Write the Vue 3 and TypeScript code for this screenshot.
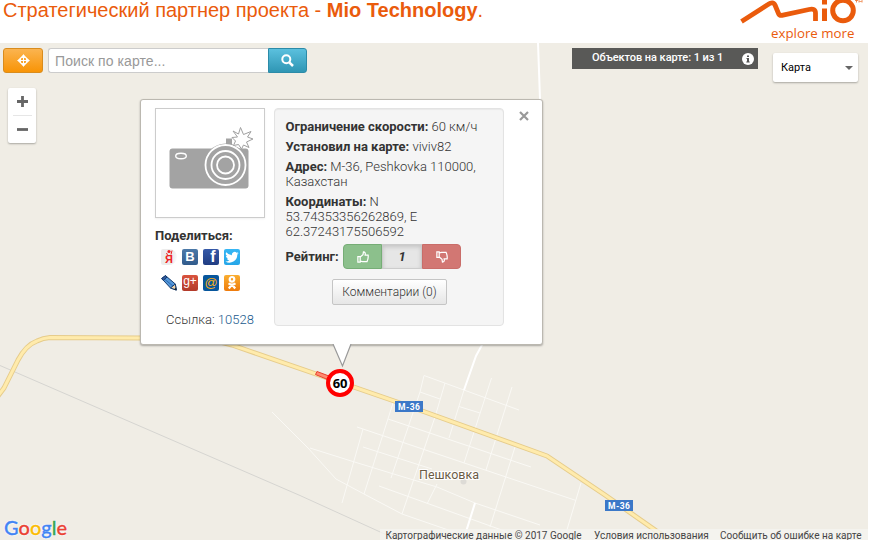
<script setup lang="ts">
import { ref } from 'vue'

interface Street { d: string }
interface ShareLink { id: string; label: string }

const query = ref('')
const rating = ref(1)

const streets: Street[] = [
  { d: 'M424 375.500L519 410' },
  { d: 'M420 392L440 399' },
  { d: 'M459 406.500L480 413' },
  { d: 'M388 419L531 467' },
  { d: 'M357 427L576 500.500' },
  { d: 'M363 447L432 469' },
  { d: 'M310 448L348 460L397 475L437 487L475 503L540 525' },
  { d: 'M379 486L510 533' },
  { d: 'M363 429L342 503' },
  { d: 'M393 403L364 494' },
  { d: 'M424 375.500L420 392L391 478' },
  { d: 'M445 383L435 417L402 514' },
  { d: 'M464 390L449 438' },
  { d: 'M491.500 378L464 463' },
  { d: 'M512 387L486 470' },
  { d: 'M515 447L490 527' },
  { d: 'M581 483L566 533' },
  { d: 'M437 484L427 504' },
  { d: 'M272 412L308 448L336 479L364 494L402 514L457 533' },
]

const shares: ShareLink[] = [
  { id: 'ya', label: 'Я' },
  { id: 'vk', label: 'B' },
  { id: 'fb', label: 'f' },
  { id: 'tw', label: '' },
  { id: 'lj', label: '' },
  { id: 'gp', label: 'g+' },
  { id: 'mail', label: '@' },
  { id: 'ok', label: '' },
]

const google = [
  { c: 'G', color: '#4285f4' },
  { c: 'o', color: '#ea4335' },
  { c: 'o', color: '#fbbc05' },
  { c: 'g', color: '#4285f4' },
  { c: 'l', color: '#34a853' },
  { c: 'e', color: '#ea4335' },
]

const thumb = 'M2 6.500h2.500v6H2zM4.500 7L7.500 4.500L8 1.500Q10.500 1.500 9.800 5H13Q13.500 8.500 11.800 12H7L4.500 11.500'
</script>

<template>
  <div class="page">
    <header class="header">
      <h2 class="title">Стратегический партнер проекта - <b>Mio Technology</b>.</h2>
      <div class="logo">
        <svg class="logo-mark" width="130" height="25" viewBox="738 0 130 25">
          <g fill="none" stroke="#ea5b0c">
            <path d="M741.500 21.500L768 4.500Q773 1 775 5L778.500 13.500Q779.500 16 783 15.200L809 9.500Q815.500 8 815.500 13V21" stroke-width="4.800" stroke-linejoin="round" />
            <path d="M824.500 8.500V21M824.500 0V4.500" stroke-width="5" />
            <circle cx="843" cy="10.500" r="10.300" stroke-width="5" />
            <path d="M855 .5H858M856.500 .5V2.500M859 2.500V.5L860.500 2L862 .5V2.500" stroke-width=".7" />
          </g>
        </svg>
        <span class="slogan">explore more</span>
      </div>
    </header>

    <main class="map">
      <svg class="roads" width="868" height="497" viewBox="0 43 868 497">
        <path d="M0 365.500L300 495.500L400 541" fill="none" stroke="#d6d5d1" stroke-width="1" />
        <g fill="none" stroke="#faf9f5" stroke-width="1">
          <path v-for="s in streets" :key="s.d" :d="s.d" />
        </g>
        <g fill="none" stroke="#fff" stroke-width="2">
          <path d="M538 43L540 99L482 345L476 356L464 390" />
          <path d="M475 503L465 535" />
        </g>
        <circle cx="463.500" cy="481.500" r="3" fill="#dddbd6" />
        <g fill="none" stroke-linejoin="round">
          <path class="road-edge" d="M-2 396L4 388L18 360Q26 345 37 341Q43 338 50 337.500L140 338L205 338L232 345L400 403L547 456L605 495L675 544" />
          <path class="road-fill" d="M-2 396L4 388L18 360Q26 345 37 341Q43 338 50 337.500L140 338L205 338L232 345L400 403L547 456L605 495L675 544" />
        </g>
        <path d="M315.500 374.500L317 371.500L329 376L327.500 379.500Z" fill="#ff8a70" stroke="#e8402f" />
        <rect x="172" y="334" width="28" height="11" fill="#2f66b4" />
        <g class="shield">
          <rect x="395" y="401" width="28" height="11" />
          <text x="409" y="409.500" textLength="22">М-36</text>
          <rect x="605" y="500" width="28" height="11" />
          <text x="619" y="508.500" textLength="22">М-36</text>
        </g>
        <text class="town" x="419" y="479" textLength="60">Пешковка</text>
      </svg>

      <div class="toolbar">
        <button class="locate" aria-label="locate">
          <svg width="13" height="13" viewBox="0 0 13 13" fill="none" stroke="#fff">
            <path d="M6.500 0.500L9 3.500H4ZM6.500 12.500L9 9.500H4ZM0.500 6.500L3.500 4V9ZM12.500 6.500L9.500 4V9Z" fill="#fff" stroke-width=".6" />
            <circle cx="6.500" cy="6.500" r="3.500" stroke-width="1.200" />
            <path d="M6.500 3V10M3 6.500H10" stroke-width="1" />
          </svg>
        </button>
        <div class="search">
          <input v-model="query" placeholder="Поиск по карте..." />
          <button class="find" aria-label="find">
            <svg width="13" height="13" viewBox="0 0 13 13" fill="none" stroke="#fff">
              <circle cx="5.300" cy="5.300" r="4" stroke-width="2" />
              <path d="M8.300 8.300L12 12" stroke-width="2.500" />
            </svg>
          </button>
        </div>
        <div class="counter">
          <span>Объектов на карте: 1 из 1</span>
          <svg width="12" height="12" viewBox="0 0 12 12">
            <circle cx="6" cy="6" r="6" fill="#fff" />
            <path d="M5 2.500h2v1.500H5zM4.500 5H7v3.500h.7v1H4.300v-1H5V6h-.5z" fill="#555" />
          </svg>
        </div>
        <button class="maptype">Карта<i class="caret"></i></button>
      </div>

      <div class="zoom">
        <button aria-label="zoom in"><svg width="11" height="11" viewBox="0 0 11 11"><path d="M5.500 0V11M0 5.500H11" stroke="#666" stroke-width="2.800" /></svg></button>
        <hr />
        <button aria-label="zoom out"><svg width="11" height="11" viewBox="0 0 11 11"><path d="M0 5.500H11" stroke="#666" stroke-width="2.800" /></svg></button>
      </div>

      <section class="popup">
        <div class="left">
          <div class="thumb">
            <svg width="108" height="108" viewBox="156 109 108 108">
              <rect x="169.500" y="148.500" width="79" height="40" rx="3" fill="#a3a3a3" />
              <path d="M226 144V138.500H232V144L236 147L248 152V165H210L214 148Z" fill="#a3a3a3" />
              <ellipse cx="181" cy="156" rx="5.300" ry="2.700" fill="#a3a3a3" stroke="#fff" stroke-width="1.400" />
              <circle cx="225.500" cy="165" r="21.500" fill="#a3a3a3" />
              <g fill="none" stroke="#fff" stroke-width="1.800">
                <circle cx="225.500" cy="165" r="20" />
                <circle cx="225.500" cy="165" r="14" />
                <circle cx="225.500" cy="165" r="8.500" />
              </g>
              <path d="M240.500 127.500L243.500 134.500L251 131.500L247.500 137L253 139L246.500 142L249 147.500L243.500 145L241.500 149L238.500 144.500L233.500 145.500L235.500 141L232 137.500L237.500 137L233 131L238.500 134Z" fill="#fff" stroke="#a0a0a0" stroke-width="1" />
            </svg>
          </div>
          <b class="share-title">Поделиться:</b>
          <div class="shares">
            <a v-for="s in shares" :key="s.id" class="share" :class="s.id">
              <span v-if="s.label">{{ s.label }}</span>
              <svg v-if="s.id === 'ya'" class="over" width="16" height="16" viewBox="0 0 16 16"><circle cx="8" cy="2.500" r="1.600" fill="#e22" /><path d="M5 4.500L7 5.500M10 5.500L11 1.500" stroke="#e22" stroke-width="1" /></svg>
              <svg v-if="s.id === 'tw'" width="16" height="16" viewBox="0 0 24 24"><path fill="#fff" d="M22 6.200a8 8 0 0 1-2.300.6 4 4 0 0 0 1.800-2.200 8 8 0 0 1-2.600 1 4.100 4.100 0 0 0-7 3.700A11.600 11.600 0 0 1 3.400 5a4.100 4.100 0 0 0 1.300 5.500 4 4 0 0 1-1.900-.5 4.100 4.100 0 0 0 3.300 4 4 4 0 0 1-1.800.1 4.100 4.100 0 0 0 3.800 2.800A8.300 8.300 0 0 1 2 18.600a11.600 11.600 0 0 0 17.900-10.300A8.300 8.300 0 0 0 22 6.200z" /></svg>
              <svg v-if="s.id === 'lj'" width="16" height="16" viewBox="0 0 16 16"><path d="M.7 3.500L4.500.6L14.300 9L15.300 15L9.500 13Z" fill="#5497d9" stroke="#163c6f" /><path d="M.7 3.500L4.500.6L6 2L2.300 5.500Z" fill="#31579a" stroke="#163c6f" /><path d="M4 4.500L12.500 11.500" stroke="#2b69b1" /><path d="M9.500 13L14.300 9L15.300 15Z" fill="#eed3ab" stroke="#163c6f" /><path d="M13 14.500L15.500 15.500L15 12.500Z" fill="#123" /></svg>
              <svg v-if="s.id === 'ok'" width="16" height="16" viewBox="0 0 16 16" fill="none" stroke="#fff" stroke-width="2.200"><circle cx="8" cy="4.300" r="2.300" /><path d="M4.500 8.300Q8 10.800 11.500 8.300M8 9.500L4.800 13.500M8 9.500L11.200 13.500" /></svg>
            </a>
          </div>
          <div class="permalink">Ссылка: <a>10528</a></div>
        </div>

        <div class="info">
          <p><b>Ограничение скорости:</b> 60 км/ч</p>
          <p><b>Установил на карте:</b> viviv82</p>
          <p><b>Адрес:</b> M-36, Peshkovka 110000, Казахстан</p>
          <p><b>Координаты:</b> N 53.74353356262869, E 62.37243175506592</p>
          <div class="rating">
            <b>Рейтинг:</b>
            <div class="votes">
              <button class="up" aria-label="up"><svg width="14" height="14" viewBox="0 0 15 14" fill="none" stroke="#fff" stroke-width="1.300"><path :d="thumb" /></svg></button>
              <span class="score">{{ rating }}</span>
              <button class="down" aria-label="down"><svg width="14" height="14" viewBox="0 0 15 14" fill="none" stroke="#fff" stroke-width="1.300"><path :d="thumb" transform="translate(0 14) scale(1 -1)" /></svg></button>
            </div>
          </div>
          <button class="comments">Комментарии (0)</button>
        </div>
        <svg class="close" width="10" height="10" viewBox="0 0 10 10"><path d="M1 1L9 9M9 1L1 9" stroke="#999" stroke-width="2.200" /></svg>
        <svg class="tail" width="26" height="26" viewBox="0 0 26 26"><path d="M3 0L12.500 22L21 0" fill="#fff" stroke="#999" stroke-width="1.200" /></svg>
      </section>

      <div class="sign">60</div>
      <div class="google"><span v-for="(g, i) in google" :key="i" :style="{ color: g.color }">{{ g.c }}</span></div>
      <footer class="legal">
        <span class="data">Картографические данные © 2017 Google</span>
        <span class="terms">Условия использования</span>
        <span class="report">Сообщить об ошибке на карте</span>
      </footer>
    </main>
  </div>
</template>

<style>
body { margin: 0; overflow: hidden; background: #fff; }
</style>

<style scoped>
* { box-sizing: border-box; }
.page { width: 882px; height: 540px; overflow: hidden; font-family: Roboto, sans-serif; font-size: 13px; color: #333; }
button { padding: 0; margin: 0; border: 0; font: inherit; display: flex; align-items: center; justify-content: center; }
.header { height: 43px; width: 868px; display: flex; justify-content: space-between; padding-left: 3px; overflow: hidden; }
.title { margin: -1px 0 0; font: 400 20px/23px "Liberation Sans", Arial, sans-serif; color: #ea5b0c; white-space: nowrap; }
.logo { width: 130px; display: flex; flex-direction: column; }
.logo-mark { flex: none; }
.slogan { font: 400 13.300px/16px "Open Sans", sans-serif; color: #ea5b0c; margin: 0 0 0 33px; white-space: nowrap; }

.map { position: relative; width: 868px; height: 497px; background: #f0ede5; overflow: hidden; }
.roads { display: block; }
.road-edge { stroke: #e6cc8b; stroke-width: 5; }
.road-fill { stroke: #ffebac; stroke-width: 3; }
.shield rect { fill: #3b78c8; }
.shield text { fill: #fff; font: 700 8.500px Roboto, sans-serif; text-anchor: middle; }
.town { fill: #6b5b45; stroke: #fff; stroke-width: 2px; paint-order: stroke; font: 400 12.500px Roboto, sans-serif; }

.toolbar { position: absolute; top: 5px; left: 3px; right: 10px; display: flex; align-items: flex-start; }
.locate { width: 40px; height: 25px; margin-right: 5px; border: 1px solid #d98c1d; border-radius: 3px; background: linear-gradient(#fbb450, #f89406); }
.search { display: flex; width: 259px; height: 25px; }
.search input { width: 220px; height: 25px; border: 1px solid #ccc; border-right: 0; border-radius: 3px 0 0 3px; padding: 0 6px; background: #fff; font: 14px "Liberation Sans", Arial, sans-serif; letter-spacing: .07px; outline: 0; }
.search input::placeholder { color: #999; opacity: 1; }
.find { width: 39px; height: 25px; border: 1px solid #2c8ba8; border-radius: 0 3px 3px 0; background: linear-gradient(#5bc0de, #2f96b4); }
.counter { width: 186px; height: 21px; margin-left: 265px; padding-left: 20px; display: flex; background: #595957; color: #fff; font-size: 11px; font-weight: 500; line-height: 19px; letter-spacing: -.05px; white-space: nowrap; }
.counter span { width: 150px; }
.counter svg { margin-top: 5px; }
.maptype { width: 85px; height: 29px; margin: 5px 0 0 15px; padding: 0 5px 0 8px; justify-content: space-between; background: #fff; border-radius: 2px; box-shadow: 0 1px 2px rgba(0,0,0,.3); font-size: 11px; color: #000; }
.caret { border: 4px solid transparent; border-top-color: #666; border-bottom: 0; }

.zoom { position: absolute; left: 8px; top: 45px; width: 28px; height: 55px; border-radius: 2px; background: #fff; box-shadow: 0 1px 2px rgba(0,0,0,.3); }
.zoom button { width: 28px; height: 27px; background: none; }
.zoom hr { width: 19px; height: 1px; border: 0; margin: 0 auto; background: #e6e6e6; }

.popup { position: absolute; left: 140px; top: 56px; width: 403px; height: 246px; display: flex; padding: 8px 14px; background: #fff; border: 1px solid #bbb8b0; border-radius: 3px; box-shadow: 0 1px 2px rgba(0,0,0,.3); }
.left { width: 110px; margin-right: 9px; }
.thumb { width: 110px; height: 110px; border: 1px solid #ccc; box-shadow: 0 1px 2px rgba(0,0,0,.06); }
.thumb svg { display: block; }
.share-title { display: block; margin-top: 10px; line-height: 15px; }
.shares { display: grid; grid-template-columns: repeat(4, 16px); gap: 10px 5px; margin: 6px 0 0 6px; }
.share { position: relative; width: 16px; height: 16px; border-radius: 2px; color: #fff; display: flex; align-items: center; justify-content: center; font: 700 13px/14px "Liberation Sans", sans-serif; }
.share svg { display: block; flex: none; }
.over { position: absolute; left: 0; top: 0; }
.ya { background: linear-gradient(100deg, #ececec 70%, #fff 100%); border-radius: 2px 8px 8px 2px; color: #e22; font-size: 11px; line-height: 12px; align-items: flex-end; }
.vk { background: linear-gradient(#4b79a8, #315b8c); }
.fb { background: linear-gradient(#3559a8, #203d82); font-size: 16px; line-height: 16px; padding-left: 4px; }
.tw { background: linear-gradient(#37b7f5, #25a6e8); }
.gp { background: linear-gradient(#d9533d, #b23b2a); font-weight: 400; line-height: 13px; font-size: 12px; align-items: flex-start; }
.mail { background: #07569c; color: #f9ae1a; font-size: 13px; line-height: 14px; font-weight: 400; }
.ok { background: linear-gradient(#faae30, #ee7b0c); }
.permalink { margin: 21px 0 0 11px; line-height: 15px; font-weight: 300; }
.permalink a { color: #1a5a8e; }
.info { width: 230px; height: 218px; padding: 10px 20px 0 10.500px; border: 1px solid #e3e3e3; border-radius: 4px; background: #f5f5f5; box-shadow: inset 0 1px 1px rgba(0,0,0,.05); font-weight: 300; }
.info p { margin: 0 0 5px; line-height: 15px; }
.info b { font-weight: 700; }
.rating { display: flex; align-items: center; height: 25px; }
.votes { display: flex; margin-left: 4.500px; }
.votes button, .score { width: 39px; height: 25px; border: 1px solid #76ad76; }
.votes .up { background: #8cc08c; border-radius: 4px 0 0 4px; }
.votes .down { background: #d27773; border-color: #c96d69; border-radius: 0 4px 4px 0; }
.score { width: 40px; border-color: #ccc; background: #e6e6e6; box-shadow: inset 0 2px 4px rgba(0,0,0,.15); text-align: center; font-weight: 700; font-style: italic; line-height: 24px; }
.comments { width: 115px; height: 26px; margin: 10px 0 0 46.500px; border: 1px solid #c5c5c5; border-radius: 2px; background: linear-gradient(#fff, #e6e6e6); font-size: 12px; font-weight: 300; color: #333; white-space: nowrap; }
.close { position: absolute; left: 378px; top: 11px; }
.tail { position: absolute; left: 189px; top: 244px; }
.sign { position: absolute; left: 326px; top: 326px; width: 28px; height: 28px; border: 4px solid #f00; border-radius: 50%; background: #fff; color: #000; font: 700 13px/20px "Noto Sans", sans-serif; letter-spacing: -.3px; text-align: center; }
.google { position: absolute; left: 4px; top: 472px; font: 500 20px/24px Lato, sans-serif; -webkit-text-stroke: .3px; text-shadow: 0 0 2px #fff, 0 0 2px #fff; }
.legal { position: absolute; right: 0; bottom: 0; width: 488px; height: 11px; display: flex; padding-left: 5.500px; background: rgba(245,244,240,.8); color: #444; font-size: 10px; line-height: 14px; white-space: nowrap; }
.data { width: 208.500px; }
.terms { width: 126px; }
</style>
